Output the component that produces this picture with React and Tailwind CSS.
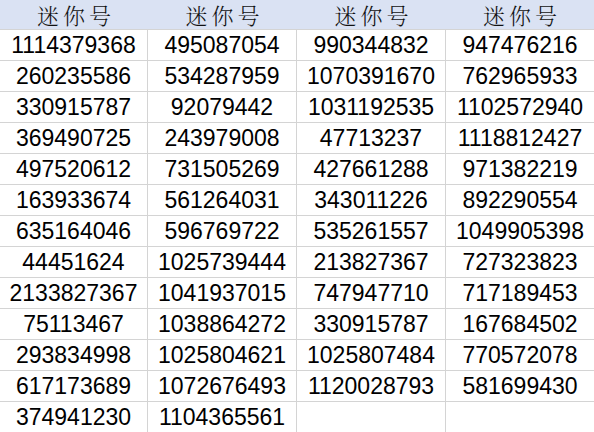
import React from "react";

const cols = [
  ["1114379368","260235586","330915787","369490725","497520612","163933674","635164046","44451624","2133827367","75113467","293834998","617173689","374941230"],
  ["495087054","534287959","92079442","243979008","731505269","561264031","596769722","1025739444","1041937015","1038864272","1025804621","1072676493","1104365561"],
  ["990344832","1070391670","1031192535","47713237","427661288","343011226","535261557","213827367","747947710","330915787","1025807484","1120028793",""],
  ["947476216","762965933","1102572940","1118812427","971382219","892290554","1049905398","727323823","717189453","167684502","770572078","581699430",""],
];

const rightBorder = ["border-r", "border-r", "border-r", ""];

export default function App() {
  const rows = cols[0].map((_, r) => cols.map((c) => c[r]));
  return (
    <div className="w-[594px] h-[432px] overflow-hidden bg-white">
      <div className="grid grid-cols-[148px_149px_149px_148px]">
        {[0, 1, 2, 3].map((i) => (
          <div
            key={"h" + i}
            className="h-[29px] bg-[#dae2f3] flex items-center justify-center text-[22px] font-light tracking-[4px] pl-[4px] text-[#111]"
            style={{ fontFamily: '"Noto Serif CJK SC", "Noto Sans CJK SC", serif' }}
          >
            迷你号
          </div>
        ))}
        {rows.map((row, r) =>
          row.map((v, i) => (
            <div
              key={r + "-" + i}
              className={`h-[31px] border-t border-[#d4d4d4] ${rightBorder[i]} flex items-center justify-center text-[23px] text-black leading-none`}
              style={{ fontFamily: '"Liberation Sans", Arial, sans-serif' }}
            >
              {v}
            </div>
          ))
        )}
      </div>
    </div>
  );
}
